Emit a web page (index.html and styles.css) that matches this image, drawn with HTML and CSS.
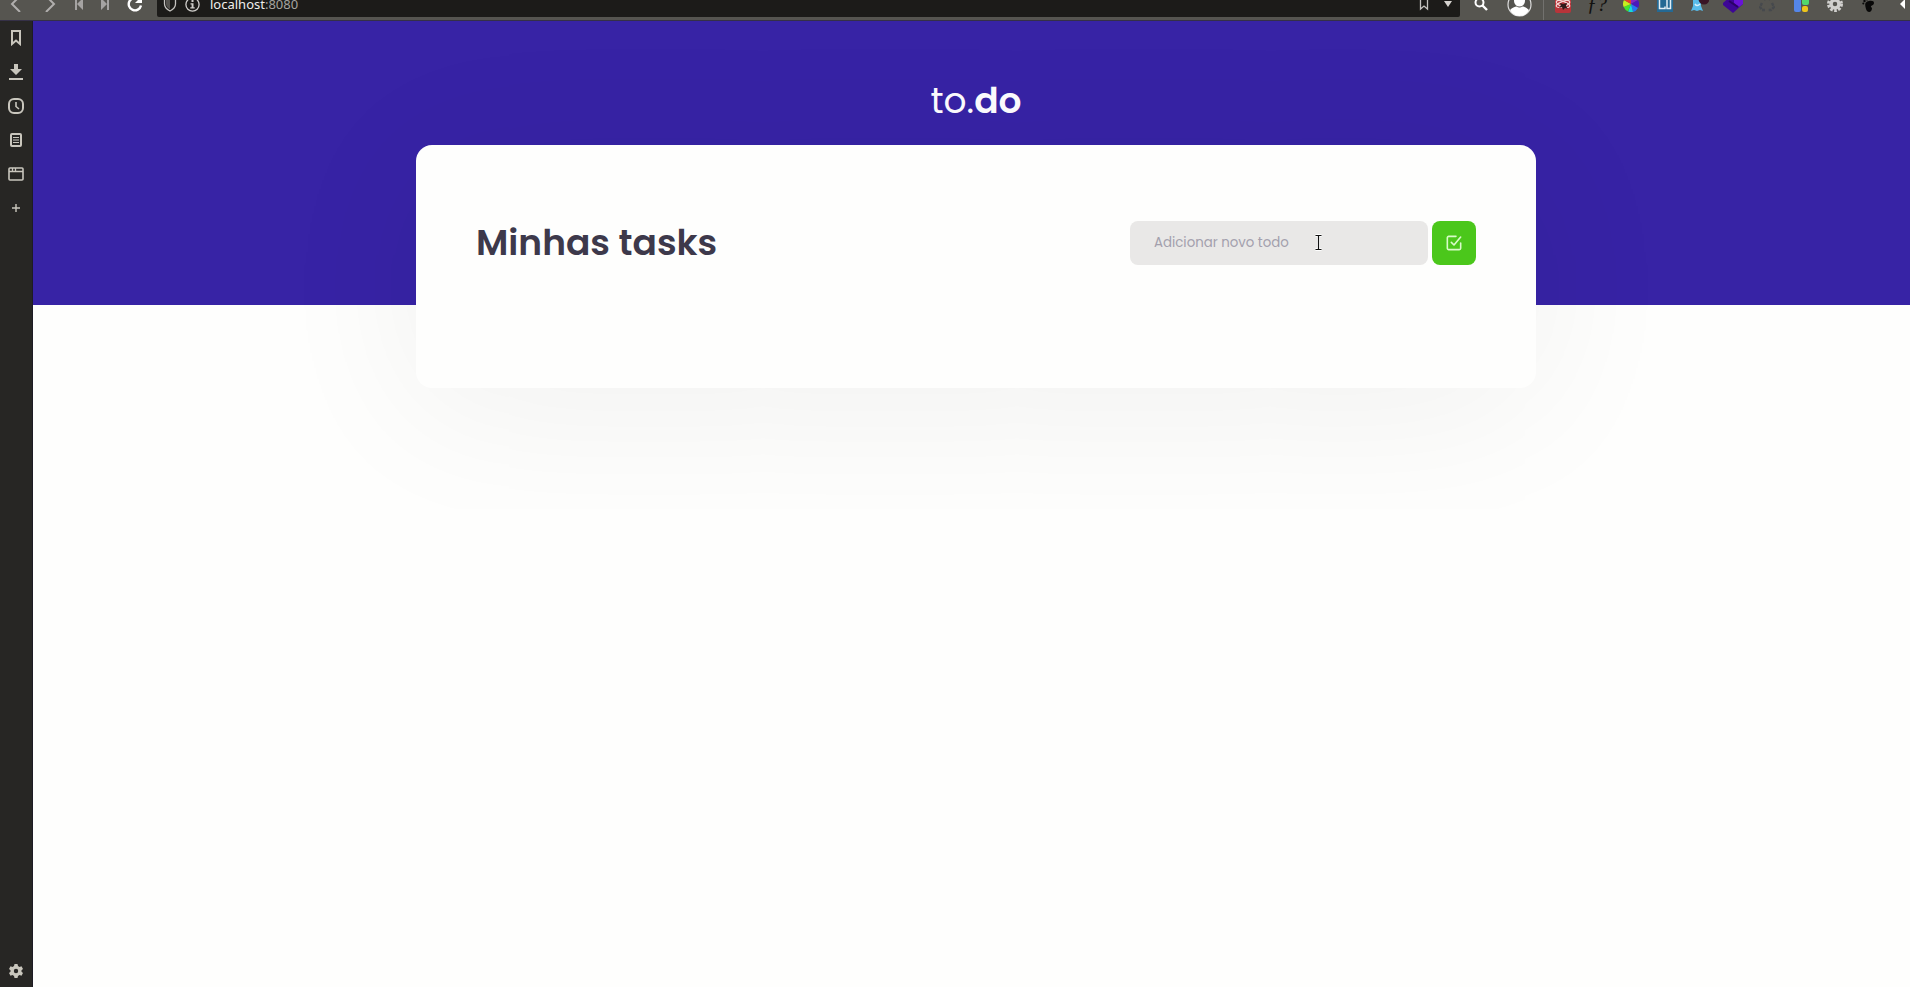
FILE: index.html
```html
<!DOCTYPE html>
<html lang="pt-BR">
<head>
<meta charset="utf-8">
<title>to.do</title>
<link rel="stylesheet" href="styles.css">
</head>
<body>
<div class="browser">
  <div class="toolbar">
    <div class="toolbar-row">
      <div class="nav">
        <button class="tool wide" aria-label="Voltar"><svg width="16" height="16" viewBox="0 0 16 16"><path d="M11 0 3 8l8 8" fill="none" stroke="#b0aead" stroke-width="2"/></svg></button>
        <button class="tool wide" aria-label="Avançar"><svg width="16" height="16" viewBox="0 0 16 16"><path d="M4 0l8 8-8 8" fill="none" stroke="#b0aead" stroke-width="2"/></svg></button>
        <button class="tool" aria-label="Retroceder"><svg width="16" height="16" viewBox="0 0 16 16"><path d="M4 2h2v12H4zM12 2v12L6 8z" fill="#a5a3a2"/></svg></button>
        <button class="tool" aria-label="Adiantar"><svg width="16" height="16" viewBox="0 0 16 16"><path d="M10 2h2v12h-2zM4 2v12l6-6z" fill="#a5a3a2"/></svg></button>
        <button class="tool wide" aria-label="Recarregar"><svg width="16" height="16" viewBox="0 0 16 16"><path d="M14 9.500A6.200 6.200 0 1 1 12 3.500" fill="none" stroke="#fff" stroke-width="2.400"/><path d="M15 0v7H8z" fill="#fff"/></svg></button>
      </div>
      <div class="address">
        <svg width="14" height="16" viewBox="0 0 14 16"><path d="M1.500 2.500 7 .8l5.500 1.700V8c0 3-2 5.200-5.500 7-3.500-1.800-5.500-4-5.500-7z" fill="#1d1c1a" stroke="#c4c2bf" stroke-width="1.300"/><path d="M7 2.500l-4 1.200V8c0 2.200 1.500 4 4 5.300z" fill="#55534f"/></svg>
        <svg width="15" height="15" viewBox="0 0 15 15"><circle cx="7.500" cy="7.500" r="6.600" fill="none" stroke="#d0cecb" stroke-width="1.300"/><path d="M6.500 3h2v2h-2zM5.500 6.300h3v4h1.200v1.200H5.300v-1.200h1.300V7.500H5.500z" fill="#d0cecb"/></svg>
        <span class="url">localhost<span class="port">:8080</span></span>
        <svg width="10" height="16" viewBox="0 0 10 16"><path d="M1.500 1h7v12L5 10l-3.500 3z" fill="none" stroke="#c4c2bf" stroke-width="1.300"/></svg>
        <svg width="10" height="6" viewBox="0 0 10 6"><path d="M1 0h8L5 6z" fill="#d6d3cf"/></svg>
      </div>
      <button class="tool search" aria-label="Pesquisar"><svg width="14" height="14" viewBox="0 0 14 14"><circle cx="5.500" cy="5.500" r="4" fill="none" stroke="#fff" stroke-width="2"/><path d="M8.500 8.500 13 13" stroke="#fff" stroke-width="2.400"/></svg></button>
      <button class="tool profile" aria-label="Perfil"><svg width="25" height="25" viewBox="0 0 25 25"><circle cx="12.500" cy="12.500" r="11.500" fill="#55544f" stroke="#ddd" stroke-width="1.200"/><circle cx="12.500" cy="9" r="5.500" fill="#fff"/><path d="M3 18c2-2 5-3.500 6.500-3.500 2 1.400 4 1.400 6 0C17 14.500 20 16 22 18c-2 4-5.500 6-9.500 6S5 22 3 18z" fill="#fff"/></svg></button>
      <div class="extensions">
        <button class="tool ext" aria-label="Atom"><svg width="16" height="18" viewBox="0 0 16 18"><rect width="16" height="18" rx="2" fill="#b8343a"/><ellipse cx="8" cy="9" rx="7" ry="2.600" fill="none" stroke="#f4d5d4" stroke-width="1.300" transform="rotate(20 8 9)"/><ellipse cx="8" cy="9" rx="7" ry="2.600" fill="none" stroke="#f4d5d4" stroke-width="1.300" transform="rotate(-20 8 9)"/><path d="M5 8l3 1 4-1-1 3 2 3-3-1-2 2-1-3-3 1 2-3z" fill="#31191a"/></svg></button>
        <button class="tool ext script" aria-label="Fontes"><i>ƒ?</i></button>
        <button class="tool ext" aria-label="Cores"><svg width="16" height="16" viewBox="0 0 16 16"><path d="M8 8V0a8 8 0 0 1 7 4z" fill="#8226c5"/><path d="M8 8l7-4a8 8 0 0 1 0 8z" fill="#4b18bd"/><path d="M8 8l7 4a8 8 0 0 1-5 4z" fill="#2476f5"/><path d="M8 8l2 8a8 8 0 0 1-5-.6z" fill="#18d9dc"/><path d="M8 8l-3 7.400A8 8 0 0 1 .7 11z" fill="#43e52e"/><path d="M8 8 .7 11A8 8 0 0 1 1 4z" fill="#c7ee20"/><path d="M8 8 1 4a8 8 0 0 1 7-4z" fill="#e8402c"/></svg></button>
        <button class="tool ext" aria-label="Biblioteca"><svg width="16" height="16" viewBox="0 0 16 16"><path d="M0 0h16v16H0z" fill="#246994"/><path d="M2.500 0v12.500H8V10.500M8 2.500h5.500v10H10V3" fill="none" stroke="#e1edf4" stroke-width="1.500"/></svg></button>
        <button class="tool ext" aria-label="Notificações"><svg width="20" height="16" viewBox="0 0 20 16"><path d="M2 15l2-5V4c0-5 8-5 8 0v6l2 5-3-1-3 1-3-1z" fill="#58bcea"/><path d="M6 8q2 3 5 0" fill="none" stroke="#d7f1fc" stroke-width="1.500"/><circle cx="15" cy="3" r="5.500" fill="#391526"/></svg></button>
        <button class="tool ext" aria-label="Blocos"><svg width="22" height="18" viewBox="0 0 22 18"><path d="M1 8l9-8 11 6v3l-10 9L1 10z" fill="#3d0696"/><path d="M12 4l4-3 5 4v4l-4 3-5-4z" fill="#6913d8"/><path d="M7 6l9 6" fill="none" stroke="#290266" stroke-width="2"/></svg></button>
        <button class="tool ext" aria-label="Sincronizar"><svg width="16" height="16" viewBox="0 0 16 16"><path d="M5 4l3-3 3 3M13 7l2 4-3 3H9M6 14H3l-2-3 2-4" fill="none" stroke="#46494d" stroke-width="2.400" stroke-dasharray="3 1"/></svg></button>
        <button class="tool ext" aria-label="Painéis"><svg width="15" height="16" viewBox="0 0 15 16"><rect width="7" height="16" rx="2" fill="#5486e9"/><rect x="8" width="7" height="9" rx="2" fill="#51d76d"/><rect x="8" y="10" width="6" height="6" rx="2" fill="#edc51b"/></svg></button>
        <button class="tool ext" aria-label="Opções"><svg width="16" height="16" viewBox="0 0 16 16"><circle cx="8" cy="8" r="6.500" fill="none" stroke="#d1d0ce" stroke-width="3" stroke-dasharray="2.600 1.484"/><circle cx="8" cy="8" r="4" fill="none" stroke="#d1d0ce" stroke-width="3.500"/></svg></button>
        <button class="tool ext" aria-label="GNOME"><svg width="14" height="16" viewBox="0 0 14 16"><path d="M7 5c6-1 6 3 3 4.500-2 1-1 1.500 0 2.500 0 5-5 5-6 1-1-4-2-7 3-8z" fill="#080808"/><ellipse cx="10" cy="1.500" rx="3" ry="2" fill="#080808"/><circle cx="5" cy="3" r="1.400" fill="#080808"/><circle cx="2.500" cy="5" r="1.200" fill="#080808"/><circle cx="1.300" cy="7.500" r="1" fill="#080808"/></svg></button>
        <button class="tool ext" aria-label="Mais extensões"><svg width="8" height="10" viewBox="0 0 8 10"><path d="M6 0v10L1 5z" fill="#fff"/></svg></button>
      </div>
    </div>
  </div>
  <div class="workspace">
    <aside class="sidebar">
      <button class="side" aria-label="Favoritos"><svg width="16" height="16" viewBox="0 0 16 16"><path d="M4 1h8v13l-4-3.500L4 14z" fill="none" stroke="#c9c6bd" stroke-width="2"/></svg></button>
      <button class="side" aria-label="Downloads"><svg width="16" height="16" viewBox="0 0 16 16"><path d="M6 0h4v5h4l-6 6-6-6h4zM1 14h14v2H1z" fill="#c9c6bd"/></svg></button>
      <button class="side" aria-label="Histórico"><svg width="16" height="16" viewBox="0 0 16 16"><rect x="1" y="1" width="14" height="14" rx="5" fill="none" stroke="#c9c6bd" stroke-width="2"/><path d="M8 4v4.500l3 2.500" fill="none" stroke="#c9c6bd" stroke-width="1.600"/></svg></button>
      <button class="side" aria-label="Notas"><svg width="16" height="16" viewBox="0 0 16 16"><rect x="3" y="2" width="10" height="12" rx="1" fill="none" stroke="#c9c6bd" stroke-width="2"/><path d="M5 5.500h6M5 8h6M5 10.500h6" stroke="#c9c6bd"/></svg></button>
      <button class="side" aria-label="Janelas"><svg width="16" height="16" viewBox="0 0 16 16"><rect x="1" y="2" width="14" height="12" rx="1" fill="none" stroke="#c9c6bd" stroke-width="1.600"/><path d="M1 5.500h14M4.500 2v3M7.500 2v3" stroke="#c9c6bd" stroke-width="1.300"/></svg></button>
      <button class="side" aria-label="Adicionar painel"><svg width="16" height="16" viewBox="0 0 16 16"><path d="M8 4v8M4 8h8" stroke="#c9c6bd" stroke-width="1.400"/></svg></button>
      <button class="side last" aria-label="Configurações"><svg width="16" height="16" viewBox="0 0 16 16"><path d="M6.500 1h3l.5 2 1.500.9 2-.6L15 6l-1.500 1.300v1.400L15 10l-1.500 2.700-2-.6L10 13l-.5 2h-3L6 13l-1.500-.9-2 .6L1 10l1.500-1.300V7.300L1 6l1.500-2.700 2 .6L6 3zM8 5.800a2.200 2.200 0 1 0 0 4.400 2.200 2.200 0 0 0 0-4.400z" fill="#c9c6bd" fill-rule="evenodd"/></svg></button>
    </aside>
    <div class="page">
      <header class="hero"><div class="logo">to.<b>do</b></div></header>
      <main class="card">
        <h1 class="title">Minhas tasks</h1>
        <form class="new-task">
          <div class="field">
            <input class="input" type="text" placeholder="Adicionar novo todo" aria-label="Adicionar novo todo">
            <svg class="cursor" width="9" height="17" viewBox="0 0 9 17"><path d="M1.500 1.500h6M1.500 15.500h6M4.500 1.500v14" fill="none" stroke="#fff" stroke-width="3"/><path d="M1.500 1.500h6M1.500 15.500h6M4.500 1.500v14" fill="none" stroke="#111" stroke-width="1.200"/></svg>
          </div>
          <button class="add" type="button" aria-label="Adicionar"><svg width="16" height="16" viewBox="0 0 24 24" fill="none" stroke="#d9fbc9" stroke-width="2.400" stroke-linecap="round" stroke-linejoin="round"><path d="M8 11l4 4L22 3"/><path d="M22 12v8a2 2 0 0 1-2 2H4a2 2 0 0 1-2-2V4a2 2 0 0 1 2-2h11"/></svg></button>
        </form>
      </main>
    </div>
  </div>
</div>
</body>
</html>
```
FILE: styles.css
```css
* { box-sizing: border-box; }
body { margin: 0; background: #fefefd; font-family: Poppins, Inter, sans-serif; }
button { margin: 0; padding: 0; border: 0; background: none; color: inherit; font: inherit; }
svg { display: block; flex: none; }

.browser { display: flex; flex-direction: column; height: 100vh; overflow: hidden; }

.toolbar { display: flex; align-items: flex-end; flex: none; height: 21px; overflow: hidden; background: #565550; border-bottom: 1px solid #353047; }
.toolbar-row { display: flex; align-items: center; flex: 1; min-width: 0; height: 32px; }
.nav { display: flex; width: 157px; }
.tool { display: flex; align-items: center; justify-content: center; flex: none; width: 26px; height: 32px; }
.wide { width: 33px; }
.address { display: flex; align-items: center; flex: 1; gap: 8px; min-width: 0; height: 26px; padding: 0 7px 0 6px; border-radius: 2px; background: #1c1b19; }
.url { flex: 1; padding-left: 2px; color: #efeeec; font: 13px/20px "Noto Sans", sans-serif; }
.port { color: #a5a39f; }
.address svg:last-child { margin-left: 6px; }
.search { width: 42px; }
.profile { width: 35px; }
.extensions { display: flex; margin-left: 6px; padding-left: 2px; border-left: 1px solid #72716e; }
.ext { width: 34px; }
.ext:last-child { width: 24px; padding-left: 10px; }
.script { color: #11110f; font: 20px/20px "Liberation Serif", serif; }

.workspace { display: flex; flex: 1; min-height: 0; }
.sidebar { display: flex; flex-direction: column; flex: none; width: 33px; background: #272624; border-right: 1px solid #1d1b24; }
.side { display: flex; align-items: center; justify-content: center; height: 34px; }
.last { height: 32px; margin-top: auto; }

/* The window runs slightly past the right edge of the screen. */
.page { flex: 1; min-width: 0; margin-right: -9px; }
.hero { height: 284px; padding-top: 50px; background: #3723a5; color: #fdfcff; text-align: center; }
.logo { font-size: 36px; line-height: 60px; font-weight: 400; }
.logo b { font-weight: 600; }
.card { display: flex; align-items: flex-start; justify-content: space-between; gap: 24px; position: relative; width: min(1120px, 90%); min-height: 243px; margin: -160px auto 0; padding: 60px; border-radius: 16px; background: #fefefd; box-shadow: 0 20px 160px rgba(0, 0, 0, .06); }
.title { margin: 0; padding-top: 10px; color: #3d394b; font-size: 36px; line-height: 56px; font-weight: 600; }
.new-task { display: flex; gap: 4px; padding-top: 16px; }
.field { position: relative; }
.input { display: block; width: 298px; height: 44px; padding: 0 24px; border: 0; border-radius: 8px; background: #e9e8e7; color: #3d394b; font-family: Poppins, Inter, sans-serif; }
.input::placeholder { color: #a3a0ad; opacity: 1; }
.cursor { position: absolute; left: 184px; top: 13px; }
.add { display: flex; align-items: center; justify-content: center; width: 44px; height: 44px; border-radius: 8px; background: #4bc71b; }
```
